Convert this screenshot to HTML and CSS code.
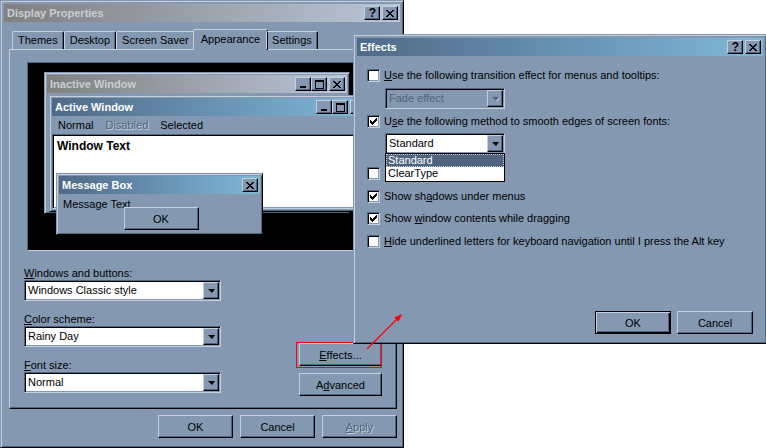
FILE: index.html
```html
<!DOCTYPE html>
<html lang="en">
<head>
    <meta charset="UTF-8">
    <title>Display Properties</title>
    <link rel="stylesheet" href="styles.css">
</head>
<body>
    <svg class="defs" width="0" height="0">
        <symbol id="i-close" viewBox="0 0 8 7"><path d="M0 0h2v1h-2z M6 0h2v1h-2z M1 1h2v1h-2z M5 1h2v1h-2z M2 2h4v1h-4z M3 3h2v1h-2z M2 4h4v1h-4z M1 5h2v1h-2z M5 5h2v1h-2z M0 6h2v1h-2z M6 6h2v1h-2z"/></symbol>
        <symbol id="i-min" viewBox="0 0 8 7"><path d="M1 5h6v2h-6z"/></symbol>
        <symbol id="i-max" viewBox="0 0 9 9"><path d="M0 0h9v9h-9z M1 2v6h7v-6z" fill-rule="evenodd"/></symbol>
        <symbol id="i-check" viewBox="0 0 7 7"><path d="M6 0h1v1h-1z M5 1h2v1h-2z M0 2h1v1h-1z M4 2h3v1h-3z M0 3h2v1h-2z M3 3h3v1h-3z M0 4h5v1h-5z M1 5h3v1h-3z M2 6h1v1h-1z"/></symbol>
    </svg>

    <div class="desk">
        <!-- Display Properties -->
        <div class="window props">
            <div class="titlebar inactive">
                <span class="title">Display Properties</span>
                <span class="cbtns">
                    <span class="cbtn raised help">?</span>
                    <span class="cbtn raised"><svg width="8" height="7"><use href="#i-close"/></svg></span>
                </span>
            </div>

            <div class="tabs">
                <span class="tab">Themes</span>
                <span class="tab">Desktop</span>
                <span class="tab">Screen Saver</span>
                <span class="tab selected">Appearance</span>
                <span class="tab">Settings</span>
            </div>

            <div class="panel">
                <div class="preview">
                    <div class="window mini inact">
                        <div class="titlebar inactive">
                            <span class="title">Inactive Window</span>
                            <span class="cbtns">
                                <span class="pair">
                                    <span class="cbtn raised"><svg width="8" height="7"><use href="#i-min"/></svg></span>
                                    <span class="cbtn raised"><svg width="9" height="9"><use href="#i-max"/></svg></span>
                                </span>
                                <span class="cbtn raised"><svg width="8" height="7"><use href="#i-close"/></svg></span>
                            </span>
                        </div>
                    </div>

                    <div class="window mini act">
                        <div class="titlebar">
                            <span class="title">Active Window</span>
                            <span class="cbtns">
                                <span class="pair">
                                    <span class="cbtn raised"><svg width="8" height="7"><use href="#i-min"/></svg></span>
                                    <span class="cbtn raised"><svg width="9" height="9"><use href="#i-max"/></svg></span>
                                </span>
                                <span class="cbtn raised"><svg width="8" height="7"><use href="#i-close"/></svg></span>
                            </span>
                        </div>
                        <div class="menubar">
                            <span>Normal</span>
                            <span class="disabled">Disabled</span>
                            <span>Selected</span>
                        </div>
                        <div class="wintext sunken">Window Text</div>
                    </div>

                    <div class="window mini msg">
                        <div class="titlebar">
                            <span class="title">Message Box</span>
                            <span class="cbtns">
                                <span class="cbtn raised"><svg width="8" height="7"><use href="#i-close"/></svg></span>
                            </span>
                        </div>
                        <div class="msg-text">Message Text</div>
                        <span class="btn raised msg-ok">OK</span>
                    </div>
                </div>

                <div class="options">
                    <div class="fields">
                        <label class="field-label"><u>W</u>indows and buttons:</label>
                        <div class="combo sunken">
                            <span class="combo-text">Windows Classic style</span>
                            <span class="combo-btn raised"></span>
                        </div>
                        <label class="field-label"><u>C</u>olor scheme:</label>
                        <div class="combo sunken">
                            <span class="combo-text">Rainy Day</span>
                            <span class="combo-btn raised"></span>
                        </div>
                        <label class="field-label"><u>F</u>ont size:</label>
                        <div class="combo sunken">
                            <span class="combo-text">Normal</span>
                            <span class="combo-btn raised"></span>
                        </div>
                    </div>
                    <div class="side">
                        <span class="btn raised"><u>E</u>ffects...</span>
                        <span class="btn raised">A<u>d</u>vanced</span>
                    </div>
                </div>
            </div>

            <div class="footer">
                <span class="btn raised">OK</span>
                <span class="btn raised">Cancel</span>
                <span class="btn raised disabled"><u>A</u>pply</span>
            </div>
        </div>

        <!-- red frame drawn around the Effects button, under the dialog -->
        <svg class="overlay" width="766" height="448">
            <rect x="296.5" y="342.5" width="85" height="25" fill="none" stroke="#ff0000" stroke-width="1"/>
        </svg>

        <!-- Effects -->
        <div class="window effects">
            <div class="titlebar">
                <span class="title">Effects</span>
                <span class="cbtns">
                    <span class="cbtn raised help">?</span>
                    <span class="cbtn raised"><svg width="8" height="7"><use href="#i-close"/></svg></span>
                </span>
            </div>

            <div class="effects-body">
                <div class="erow">
                    <span class="check sunken"></span>
                    <span><u>U</u>se the following transition effect for menus and tooltips:</span>
                </div>
                <div class="combo sunken off ecombo first">
                    <span class="combo-text">Fade effect</span>
                    <span class="combo-btn raised"></span>
                </div>
                <div class="erow">
                    <span class="check sunken"><svg width="7" height="7"><use href="#i-check"/></svg></span>
                    <span>U<u>s</u>e the following method to smooth edges of screen fonts:</span>
                </div>
                <div class="combo sunken ecombo second">
                    <span class="combo-text">Standard</span>
                    <span class="combo-btn raised"></span>
                    <div class="droplist">
                        <div class="item current">Standard</div>
                        <div class="item">ClearType</div>
                    </div>
                </div>
                <div class="erow r3">
                    <span class="check sunken"></span>
                </div>
                <div class="erow r4">
                    <span class="check sunken"><svg width="7" height="7"><use href="#i-check"/></svg></span>
                    <span>Show sh<u>a</u>dows under menus</span>
                </div>
                <div class="erow r5">
                    <span class="check sunken"><svg width="7" height="7"><use href="#i-check"/></svg></span>
                    <span>Show <u>w</u>indow contents while dragging</span>
                </div>
                <div class="erow r6">
                    <span class="check sunken"></span>
                    <span><u>H</u>ide underlined letters for keyboard navigation until I press the Alt key</span>
                </div>

                <div class="effects-footer">
                    <span class="btn default">OK</span>
                    <span class="btn raised">Cancel</span>
                </div>
            </div>
        </div>

        <svg class="overlay" width="766" height="448">
            <line x1="367" y1="349" x2="397" y2="319" stroke="#ff0000" stroke-width="1.2"/>
            <polygon points="402,314 398.5,321.8 394.2,317.6" fill="#ff0000"/>
        </svg>
    </div>
</body>
</html>
```

FILE: styles.css
```css
:root {
    --face: #8499b1;
    --light: #c6d0dc;
    --shadow: #4f657d;
    --dark: #000;
}

* {
    box-sizing: border-box;
}

body {
    margin: 0;
    background-color: #fff;
    font-family: "Liberation Sans", Arial, sans-serif;
    font-size: 11px;
    color: #000;
}

.defs {
    position: absolute;
}

.desk {
    position: relative;
    width: 766px;
    height: 448px;
    overflow: hidden;
}

u {
    text-decoration-thickness: 1px;
    text-underline-offset: 1px;
}

/* 3D edges */
.raised {
    background-color: var(--face);
    border: 1px solid;
    border-color: var(--light) var(--dark) var(--dark) var(--light);
    box-shadow: inset -1px -1px var(--shadow);
}

.sunken {
    border: 1px solid;
    border-color: var(--shadow) var(--light) var(--light) var(--shadow);
    box-shadow: inset 1px 1px var(--dark), inset -1px -1px var(--face);
}

/* windows */
.window {
    position: absolute;
    display: flex;
    flex-direction: column;
    background-color: var(--face);
    border: 1px solid;
    border-color: var(--face) var(--dark) var(--dark) var(--face);
    box-shadow: inset 1px 1px var(--light), inset -1px -1px var(--shadow);
    padding: 3px;
}

.props {
    left: 0;
    top: 0;
    width: 404px;
    height: 448px;
}

.effects {
    left: 353px;
    top: 34px;
    width: 414px;
    height: 310px;
}

.titlebar {
    flex-shrink: 0;
    height: 18px;
    display: flex;
    align-items: center;
    padding: 0 2px 0 3px;
    font-weight: bold;
    color: #fff;
    background: linear-gradient(90deg, #4f6a88, #80b8d8);
}

.titlebar.inactive {
    color: #c9ced4;
    background: linear-gradient(90deg, #808080, #b9c5d6);
}

.title {
    flex: 1;
    white-space: nowrap;
    overflow: hidden;
}

.cbtns {
    display: flex;
    gap: 2px;
}

.pair {
    display: flex;
}

.cbtn {
    width: 16px;
    height: 14px;
    display: flex;
    align-items: center;
    justify-content: center;
    color: #000;
}

.cbtn svg {
    fill: #000;
}

.help {
    font-size: 12px;
    line-height: 12px;
    padding-left: 1px;
}

/* tabs */
.tabs {
    display: flex;
    align-items: flex-end;
    height: 20px;
    margin-top: 7px;
    padding-left: 8px;
    position: relative;
    z-index: 1;
}

.tab {
    height: 18px;
    padding: 0 5px;
    line-height: 17px;
    border: 1px solid;
    border-bottom: none;
    border-color: var(--light) var(--dark) transparent var(--light);
    border-radius: 2px 2px 0 0;
    box-shadow: inset -1px 0 var(--shadow);
    white-space: nowrap;
}

.tab.selected {
    height: 21px;
    margin: 0 -2px -1px;
    padding: 0 7px;
    line-height: 18px;
    background-color: var(--face);
}

.panel {
    flex-shrink: 0;
    height: 360px;
    margin: 0 3px 0 5px;
    border: 1px solid;
    border-color: var(--light) var(--dark) var(--dark) var(--light);
    box-shadow: inset -1px -1px var(--shadow);
    display: flex;
    flex-direction: column;
}

/* preview canvas */
.preview {
    position: relative;
    width: 351px;
    height: 189px;
    margin: 12px 0 0 17px;
    background-color: #000;
    border: 1px solid;
    border-color: var(--shadow) var(--light) var(--light) var(--shadow);
    overflow: hidden;
}

.mini {
    padding: 2px;
}

.inact {
    left: 16px;
    top: 9px;
    width: 306px;
    height: 142px;
}

.act {
    left: 21px;
    top: 32px;
    width: 322px;
    height: 117px;
}

.msg {
    left: 28px;
    top: 110px;
    width: 207px;
    height: 62px;
}

.menubar {
    display: flex;
    height: 18px;
    align-items: center;
}

.menubar span {
    padding: 0 6px;
}

.disabled {
    color: var(--shadow);
    text-shadow: 1px 1px var(--light);
}

.wintext {
    flex: 1;
    background-color: #fff;
    padding: 4px;
    font-weight: bold;
    font-size: 12px;
}

.msg-text {
    padding: 4px 4px 0;
    line-height: 13px;
}

.msg-ok {
    align-self: center;
    width: 72px;
    height: 24px;
    margin-top: -4px;
    margin-left: 3px;
}

/* fields */
.options {
    display: flex;
    align-items: flex-end;
    margin: 15px 14px 0 14px;
}

.fields {
    width: 197px;
    display: flex;
    flex-direction: column;
}

.field-label {
    line-height: 14px;
    height: 14px;
    margin-top: 11px;
}

.field-label:first-child {
    margin-top: 0;
}

.combo {
    display: flex;
    height: 21px;
    padding: 1px;
    background-color: #fff;
    position: relative;
}

.combo-text {
    flex: 1;
    line-height: 17px;
    padding-left: 2px;
    white-space: nowrap;
}

.combo-btn {
    width: 16px;
    height: 17px;
    display: flex;
    align-items: center;
    justify-content: center;
}

.combo-btn::after {
    content: "";
    border-left: 4px solid transparent;
    border-right: 3px solid transparent;
    border-top: 4px solid #000;
    margin-top: 1px;
}

.combo.off {
    background-color: var(--face);
    color: var(--shadow);
}

.combo.off .combo-btn::after {
    border-top-color: var(--shadow);
    filter: drop-shadow(1px 1px 0 var(--light));
}

.side {
    margin-left: auto;
    margin-bottom: -3px;
    display: flex;
    flex-direction: column;
    gap: 7px;
}

/* buttons */
.btn {
    display: flex;
    align-items: center;
    justify-content: center;
    width: 75px;
    height: 23px;
}

.side .btn {
    width: 83px;
}

.btn.disabled {
    color: var(--shadow);
    text-shadow: 1px 1px var(--light);
}

.btn.default {
    background-color: var(--face);
    border: 1px solid #000;
    box-shadow: inset 1px 1px var(--light), inset -1px -1px #000, inset -2px -2px var(--shadow);
}

.footer {
    display: flex;
    justify-content: flex-end;
    gap: 7px;
    margin: 6px 3px 0 0;
}

/* effects dialog */
.effects-body {
    flex: 1;
    display: flex;
    flex-direction: column;
    padding: 13px 10px 6px 10px;
}

.erow {
    display: flex;
    align-items: center;
    gap: 4px;
    height: 13px;
    line-height: 13px;
    white-space: nowrap;
}

.check {
    width: 13px;
    height: 13px;
    flex-shrink: 0;
    padding: 1px;
    display: flex;
    align-items: center;
    justify-content: center;
    background-color: #fff;
}

.check svg {
    fill: #000;
}

.ecombo {
    width: 120px;
    margin-left: 18px;
}

.ecombo.first {
    margin-top: 6px;
    margin-bottom: 6px;
}

.ecombo.second {
    margin-top: 5px;
    z-index: 2;
}

.r3 { margin-top: 13px; }
.r4 { margin-top: 10px; }
.r5 { margin-top: 9px; }
.r6 { margin-top: 10px; }

.droplist {
    position: absolute;
    left: -1px;
    top: 19px;
    width: 120px;
    height: 29px;
    border: 1px solid #000;
    background-color: #fff;
}

.item {
    height: 13px;
    line-height: 13px;
    padding-left: 2px;
}

.item.current {
    background-color: var(--shadow);
    color: #fff;
    outline: 1px dotted #c6d0dc;
    outline-offset: -1px;
}

.effects-footer {
    margin-top: auto;
    display: flex;
    justify-content: flex-end;
    gap: 6px;
}

.effects-footer .btn {
    width: 76px;
}

.overlay {
    position: absolute;
    left: 0;
    top: 0;
    pointer-events: none;
}
```
